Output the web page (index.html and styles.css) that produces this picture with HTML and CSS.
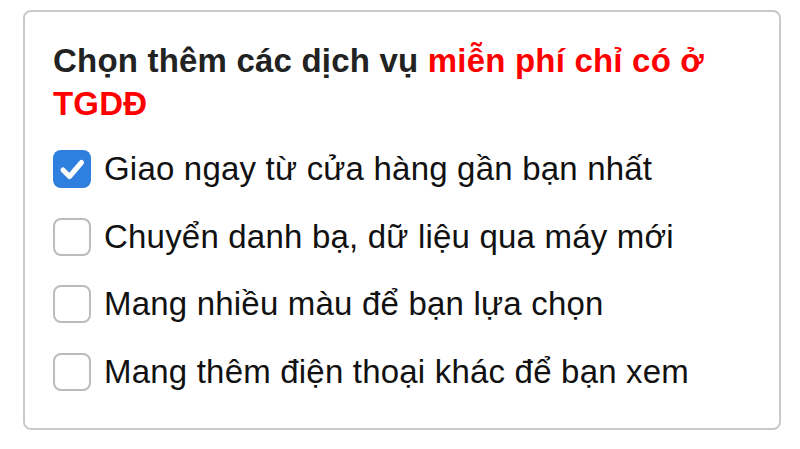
FILE: index.html
```html
<!DOCTYPE html>
<html lang="vi">
<head>
<meta charset="utf-8">
<link rel="stylesheet" href="styles.css">
</head>
<body>
<div class="card">
  <h2 class="title">Chọn thêm các dịch vụ <span class="hl">miễn phí chỉ có ở TGDĐ</span></h2>
  <ul class="opts">
    <li class="opt"><span class="box checked"><svg viewBox="0 0 38 38" width="38" height="38"><path d="M10 20 L16.5 26.5 L28.5 12.5" fill="none" stroke="#fff" stroke-width="5" stroke-linecap="round" stroke-linejoin="round"/></svg></span><span class="lbl">Giao ngay từ cửa hàng gần bạn nhất</span></li>
    <li class="opt"><span class="box"></span><span class="lbl">Chuyển danh bạ, dữ liệu qua máy mới</span></li>
    <li class="opt"><span class="box"></span><span class="lbl">Mang nhiều màu để bạn lựa chọn</span></li>
    <li class="opt"><span class="box"></span><span class="lbl">Mang thêm điện thoại khác để bạn xem</span></li>
  </ul>
</div>
</body>
</html>
```
FILE: styles.css
```css
html, body {
  margin: 0;
  padding: 0;
  background: #fff;
}
body {
  font-family: "Liberation Sans", Arial, sans-serif;
  color: #111;
}
.card {
  box-sizing: border-box;
  margin: 10px 0 0 23px;
  width: 758px;
  height: 420px;
  border: 2px solid #c9c9c9;
  border-radius: 8px;
  padding: 27px 28px 0 28px;
}
.title {
  margin: 0;
  font-size: 33px;
  line-height: 43px;
  letter-spacing: 0.2px;
  font-weight: bold;
  color: #222;
}
.hl {
  color: #ff0000;
}
.opts {
  list-style: none;
  margin: 25px 0 0 0;
  padding: 0;
  display: flex;
  flex-direction: column;
  gap: 29.5px;
}
.opt {
  display: flex;
  align-items: center;
  height: 38px;
  gap: 13px;
}
.box {
  box-sizing: border-box;
  width: 38px;
  height: 38px;
  border: 2px solid #bcbcbc;
  border-radius: 8px;
  display: flex;
  align-items: center;
  justify-content: center;
  flex: none;
  background: #fff;
}
.box.checked {
  background: #2f7fdf;
  border: none;
}
.lbl {
  font-size: 33px;
  letter-spacing: 0.2px;
  color: #111;
}
```
